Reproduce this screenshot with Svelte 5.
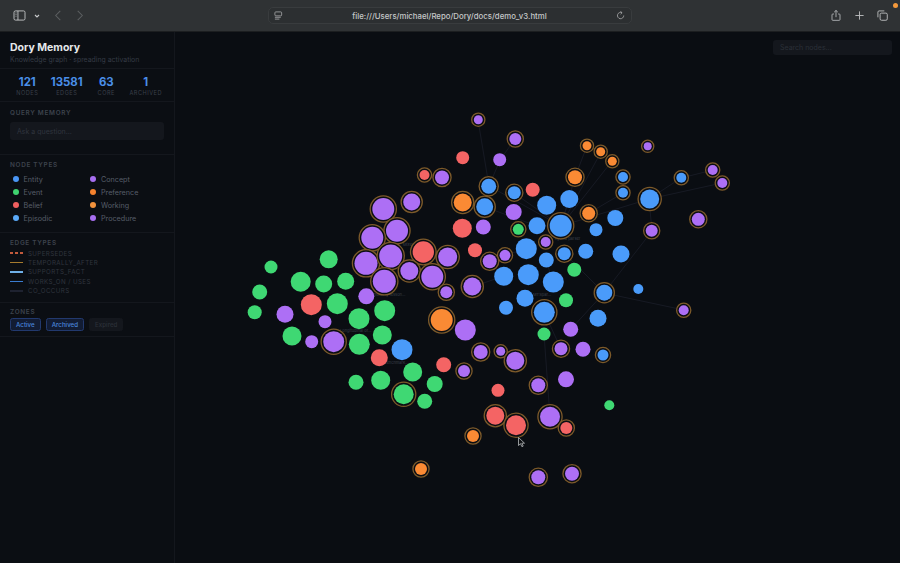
<script>
  const stats = [['121','Nodes'],['13581','Edges'],['63','Core'],['1','Archived']];
  const types = [['Entity','entity'],['Concept','concept'],['Event','event'],['Preference','preference'],['Belief','belief'],['Working','working'],['Episodic','episodic'],['Procedure','procedure']];
  const edgeTypes = [['SUPERSEDES','supersedes'],['TEMPORALLY_AFTER','temporal'],['SUPPORTS_FACT','supports'],['WORKS_ON / USES','works'],['CO_OCCURS','co']];
  // x, y, radius, type, ring
  const nodes = [
    [383.3,209,11,'p',1],[411.7,202,8.5,'p',1],[397,230.7,11,'p',1],[372.3,237.7,11,'p',1],[366,263.3,11.5,'p',1],[390.7,256,11.5,'p',1],
    [423.3,252,10.7,'r',1],[447.7,257,9.5,'p',1],[409.3,271,9,'p',1],[432.3,276.7,11,'p',1],[384.3,281.3,11.5,'p',1],[446.3,292.3,6,'p',1],
    [472.3,286.5,9,'p',1],[462.7,202.5,9,'o',1],[462.3,228.3,9.5,'r',0],[328.7,259.3,9,'g',0],[271,267,6.5,'g',0],[300.7,281.7,10,'g',0],
    [323.7,284,8.5,'g',0],[345.7,281.3,8.5,'g',0],[259.7,292,7.5,'g',0],[254.7,312.3,7,'g',0],[311.3,304.7,10.5,'r',0],[337.3,303.7,10.5,'g',0],
    [366.3,296.3,8,'p',0],[384.7,310.7,10.5,'g',0],[285,314.3,8.5,'p',0],[325,321.7,6.5,'p',0],[359,318.7,10.5,'g',0],[382.3,335,9.5,'g',0],
    [292,336,9.5,'g',0],[311.7,341.7,6.5,'p',0],[333.7,341.7,10.5,'p',1],[359.3,344.3,10.5,'g',0],[402,349.7,10.5,'b',0],[379.3,357.7,8.5,'r',0],
    [441.7,320,11,'o',1],[465.3,330,10.5,'p',0],[443.7,364.7,7.5,'r',0],[464,371,6,'p',1],[412.7,372,9.5,'g',0],[380.7,380.3,9.5,'g',0],
    [356,382.3,7.5,'g',0],[434.7,384,8,'g',0],[403.7,394.3,10,'g',1],[424.7,401.3,7.5,'g',0],
    [478.3,119.7,4.5,'p',1],[515.3,139,6,'p',1],[462.7,157.7,6.5,'r',0],[499.7,159.7,6.5,'p',0],[587,145.7,4.5,'o',1],[600.7,151.7,4.5,'o',1],
    [612.3,161.3,4.5,'o',1],[647.7,146.3,4,'p',1],[575,177.3,7,'o',1],[623,177,5,'b',1],[681.3,177.7,5,'b',1],[712.7,170,5,'p',1],[722.3,183,5,'p',1],
    [424.5,175,5,'r',1],[442,177.5,7,'p',1],
    [488.7,186.3,7.5,'b',1],[514.3,192.7,6.5,'b',1],[532.7,189.7,7,'r',0],[569.3,199,9,'b',0],[623,192.7,5,'b',1],[649.7,199,9.5,'b',1],
    [546.7,205.3,9.5,'b',0],[484.7,206.7,8.5,'b',1],[513.7,212,8,'p',0],[588.7,213.3,6.5,'o',1],[615.3,218,8,'b',0],[560.7,225.7,11,'b',1],
    [537,225.7,8.5,'b',0],[698.3,219.3,6.5,'p',1],[483.3,227,7.5,'p',0],[518.3,229.3,5.5,'g',1],[596,229.7,6.5,'b',0],[651.7,230.7,6,'p',1],
    [545.7,242,5,'p',1],[526.3,248.7,10.5,'b',0],[585.7,251.3,7.5,'b',0],[475,250.3,7,'r',0],[505,255.3,5.5,'p',1],[564.3,253.7,6.5,'b',1],
    [621,254,8.5,'b',0],[546.3,260,7.5,'b',0],[489.7,261.3,7,'p',1],[574.3,269.7,7,'g',0],[528.3,274.7,10.5,'b',0],[503.7,276.3,9.5,'b',0],
    [553.3,282,10.5,'b',0],[604.3,292.7,8,'b',1],[638.3,289,5,'b',0],[525,298.3,8.5,'b',0],[566,300.3,7,'g',0],[506,307.7,7,'b',0],
    [544.3,312.3,10.5,'b',1],[683.7,310.3,5,'p',1],[598,318.3,8.5,'b',0],[570.7,329.3,7.5,'p',0],[544,334,6.5,'g',0],
    [480.7,352,7,'p',1],[500.7,351.3,4.5,'p',1],[515.3,360.7,9,'p',1],[561,348.7,6.5,'p',1],[583,349.3,7.5,'p',0],[603,355,5.5,'b',1],
    [538.3,385.3,7,'p',1],[566,379.3,8,'p',0],[498,390.3,6.5,'r',0],[609.3,405.3,5,'g',0],[495.3,415.7,9,'r',1],[516,425.3,10,'r',1],
    [550,416.7,10,'p',1],[566.3,428,6,'r',1],[473,436,6,'o',1],[421,469,6,'o',1],[538.3,477.3,7,'p',1],[572,473.7,7,'p',1]
  ];
  const edges = [
    [478,120,489,186],[515,139,500,160],[500,160,489,186],[587,146,575,177],[575,177,561,226],[601,152,561,226],[612,161,561,226],
    [649,199,561,226],[623,193,589,213],[649,199,681,178],[681,178,713,170],[649,199,722,183],[649,199,652,231],[652,231,604,293],
    [565,254,604,293],[604,293,684,310],[604,293,571,329],[544,312,561,349],[544,334,550,417],[489,186,561,226],[514,193,561,226],
    [485,207,537,226],[537,226,561,226],[547,205,561,226],[569,199,561,226],[505,255,526,249],[472,287,504,276],[546,260,553,282]
  ];
  const labels = [[371,252,'Agent…'],[403,246,'Mixed…'],[373,296,'memory lesson…'],[340,332,'Longitudinal or…'],[384,364,'benchmark…'],[533,296,'MTSpar…'],[555,240,'hybrid parser']];
</script>

<div class="page">
  <header class="chrome">
    <div class="left">
      <svg class="ico" viewBox="0 0 14 12"><rect x="1" y="1" width="12" height="10" rx="1.6"/><path d="M5.3 1v10"/><path class="thin" d="M2.6 3.2h1.2M2.6 5h1.2M2.6 6.8h1.2"/></svg>
      <svg class="chev" viewBox="0 0 6 4"><path d="M1 1l2 2 2-2"/></svg>
      <svg class="nav" viewBox="0 0 8 12"><path d="M6.5 1L1.5 6l5 5"/></svg>
      <svg class="nav" viewBox="0 0 8 12"><path d="M1.5 1l5 5-5 5"/></svg>
    </div>
    <div class="url">
      <svg class="site" viewBox="0 0 10 10"><rect x="1" y="1" width="7.5" height="4.4" rx="1"/><path d="M1 7h6.5M1 9h5"/></svg>
      <span class="address">file:///Users/michael/Repo/Dory/docs/demo_v3.html</span>
      <svg class="reload" viewBox="0 0 10 10"><path d="M6.6 1.9A3.5 3.5 0 1 0 8.6 5"/><path d="M4.9.4l1.9 1.5-1.7 1.6"/></svg>
    </div>
    <div class="right">
      <svg class="tool share" viewBox="0 0 12 14"><path d="M3.5 5.2H2.2a1 1 0 0 0-1 1v5.6a1 1 0 0 0 1 1h7.6a1 1 0 0 0 1-1V6.2a1 1 0 0 0-1-1H8.5"/><path d="M6 9V1M3.8 3L6 .9 8.2 3"/></svg>
      <svg class="tool" viewBox="0 0 12 12"><path d="M6 1.5v9M1.5 6h9"/></svg>
      <svg class="tool" viewBox="0 0 12 12"><rect x="3.4" y="3.4" width="7.8" height="7.8" rx="1.5"/><path d="M1 8V2.2A1.3 1.3 0 0 1 2.2 1H8"/></svg>
    </div>
    <span class="rec"></span>
  </header>

  <main class="main">
    <aside class="side">
      <section class="head">
        <h1>Dory Memory</h1>
        <p>Knowledge graph · spreading activation</p>
      </section>
      <section class="stats">
        {#each stats as [value, name]}
          <div class="stat"><b>{value}</b><span>{name}</span></div>
        {/each}
      </section>
      <section class="query">
        <h2>Query Memory</h2>
        <div class="input">Ask a question...</div>
      </section>
      <section class="legend">
        <h2>Node Types</h2>
        <div class="grid">
          {#each types as [name, cls]}
            <div class="item"><i class="dot {cls}"></i>{name}</div>
          {/each}
        </div>
      </section>
      <section class="etypes">
        <h2>Edge Types</h2>
        {#each edgeTypes as [name, cls]}
          <div class="edge"><i class="line {cls}"></i>{name}</div>
        {/each}
      </section>
      <section class="zones">
        <h2>Zones</h2>
        <div class="chips">
          <span class="chip on">Active</span>
          <span class="chip on">Archived</span>
          <span class="chip off">Expired</span>
        </div>
      </section>
    </aside>

    <div class="canvas">
      <svg class="graph" viewBox="175 32 725 531">
        {#each edges as [x1, y1, x2, y2]}
          <line class="link" {x1} {y1} {x2} {y2} />
        {/each}
        {#each labels as [x, y, t]}
          <text class="lbl" {x} {y}>{t}</text>
        {/each}
        {#each nodes as [cx, cy, r, t, ring]}
          {#if ring}
            <circle class="ring" {cx} {cy} r={r + 2.1} />
          {/if}
          <circle class="n-{t}" {cx} {cy} {r} />
        {/each}
        <path class="cursor" d="M518.5 437.5v8l2-1.8 1.4 3 1.3-.6-1.4-2.9h2.7z" />
      </svg>
      <div class="search">Search nodes...</div>
    </div>
  </main>
</div>

<style>
  :global(body) { margin: 0; background: #0a0d12; }
  .page { width: 900px; height: 563px; display: flex; flex-direction: column; overflow: hidden; font-family: Inter, "Liberation Sans", sans-serif; }

  .chrome { position: relative; flex: 0 0 32px; box-sizing: border-box; display: flex; align-items: center; background: #2f3234; border-bottom: 1px solid #1c1e20; }
  .left { width: 268px; display: flex; align-items: center; padding-left: 13px; box-sizing: border-box; }
  .ico { width: 13px; height: 11px; fill: none; stroke: #c4c6c7; stroke-width: 1; }
  .ico .thin { stroke-width: .7; }
  .chev { width: 6px; height: 4px; margin-left: 8px; fill: none; stroke: #c8cacb; stroke-width: 1.1; }
  .nav { width: 8px; height: 11px; fill: none; stroke: #5c5f61; stroke-width: 1.1; margin-left: 14px; }
  .chev + .nav { margin-left: 14px; }
  .url { width: 364px; height: 17px; display: flex; align-items: center; box-sizing: border-box; padding: 0 3px 0 5px; border: 1px solid #393c3e; border-radius: 5px; background: #2c2f31; }
  .site { width: 9px; height: 9px; fill: none; stroke: #a8aaab; stroke-width: .9; }
  .address { flex: 1; text-align: center; font-size: 7.8px; font-weight: 500; color: #c6c8c9; font-family: Inter, "Liberation Sans", sans-serif; }
  .reload { width: 9px; height: 9px; fill: none; stroke: #a8aaab; stroke-width: .9; margin-right: 3px; }
  .right { flex: 1; display: flex; align-items: center; gap: 12.5px; padding-left: 199px; margin-top: 0; }
  .tool { width: 11px; height: 11px; fill: none; stroke: #bcbec0; stroke-width: 1; flex: none; }
  .share { height: 13px; width: 10px; }
  .rec { position: absolute; right: 2.5px; top: 2.5px; width: 5px; height: 5px; border-radius: 50%; background: #f59a3c; }

  .main { flex: 1; display: flex; min-height: 0; }
  .side { width: 175px; box-sizing: border-box; border-right: 1px solid #14171d; background: #0b0e13; flex: none; }
  section { border-bottom: 1px solid #14171d; padding: 0 10px; box-sizing: border-box; }
  h2 { margin: 0; font-size: 6.4px; line-height: 8px; font-weight: 600; letter-spacing: .7px; text-transform: uppercase; color: #3d434d; }

  .head { height: 37px; padding-top: 9px; }
  h1 { margin: 0; font-size: 10.5px; line-height: 13px; font-weight: 700; color: #e6e8ea; }
  .head p { margin: 1px 0 0; font-size: 6.9px; line-height: 9px; color: #353b45; }

  .stats { height: 33px; display: grid; grid-template-columns: repeat(4, 39.5px); padding: 6px 0 0 7.5px; gap: 0; }
  .stat { display: flex; flex-direction: column; align-items: center; }
  .stat b { font-size: 11.4px; line-height: 14px; font-weight: 700; color: #4a8fe8; }
  .stat span { font-size: 5.6px; line-height: 8px; letter-spacing: .5px; text-transform: uppercase; color: #3a404a; }

  .query { height: 53px; padding-top: 7px; }
  .input { margin-top: 5px; height: 18px; box-sizing: border-box; padding: 0 7px; display: flex; align-items: center; border-radius: 3px; background: #14171d; font-size: 7px; color: #30353e; }

  .legend { height: 78px; padding-top: 6px; }
  .grid { display: grid; grid-template-columns: 77.5px 1fr; grid-auto-rows: 13px; margin-top: 3.5px; }
  .item { display: flex; align-items: center; font-size: 7.2px; color: #565d68; padding-left: 2.5px; }
  .dot { width: 6px; height: 6px; border-radius: 50%; margin-right: 5px; flex: none; }
  .entity { background: #4a96f5; }
  .concept { background: #a76ef0; }
  .event { background: #3fd26f; }
  .preference { background: #f5822e; }
  .belief { background: #ef5f5f; }
  .working { background: #f2923c; }
  .episodic { background: #5aa9f7; }
  .procedure { background: #a76ef0; }

  .etypes { height: 70px; padding-top: 6px; }
  .etypes h2 { margin-bottom: 1.5px; }
  .edge { height: 9.4px; display: flex; align-items: center; font-size: 6.2px; letter-spacing: .4px; color: #30353e; }
  .line { width: 13px; height: 1.5px; margin-right: 5px; flex: none; }
  .supersedes { background: repeating-linear-gradient(90deg, #c25a3c 0 3px, transparent 3px 5px); }
  .temporal { background: #a67b2e; }
  .supports { background: #6fb0e8; }
  .works { background: #3a7cd0; }
  .co { background: #1e2230; }

  .zones { height: 34px; padding-top: 4.5px; }
  .chips { display: flex; gap: 5px; margin-top: 2px; }
  .chip { height: 13px; box-sizing: border-box; padding: 0 5px; display: flex; align-items: center; border-radius: 2.5px; font-size: 6.2px; font-weight: 500; }
  .on { background: #121c33; border: 1px solid #22396e; color: #4a86dc; }
  .off { background: #14171d; border: 1px solid #14171d; color: #2b3038; }

  .canvas { flex: 1; position: relative; min-width: 0; background: #0a0d12; }
  .graph { display: block; width: 100%; height: 100%; }
  .link { stroke: #171a24; stroke-width: 1; }
  .lbl { font-size: 4px; fill: #3a404a; font-family: Inter, "Liberation Sans", sans-serif; }
  .ring { fill: #0b0e13; stroke: #7d5a2a; stroke-width: 1.3; }
  .n-p { fill: #ad6ff5; }
  .n-b { fill: #4a9bfa; }
  .n-g { fill: #3fd873; }
  .n-r { fill: #f46464; }
  .n-o { fill: #fa8a34; }
  .cursor { fill: #0f1114; stroke: #d0d2d4; stroke-width: .7; }
  .search { position: absolute; left: 598px; top: 8px; width: 119px; height: 15px; box-sizing: border-box; padding-left: 7px; display: flex; align-items: center; border-radius: 3px; background: #14171d; font-size: 7px; color: #2b3038; }
</style>
